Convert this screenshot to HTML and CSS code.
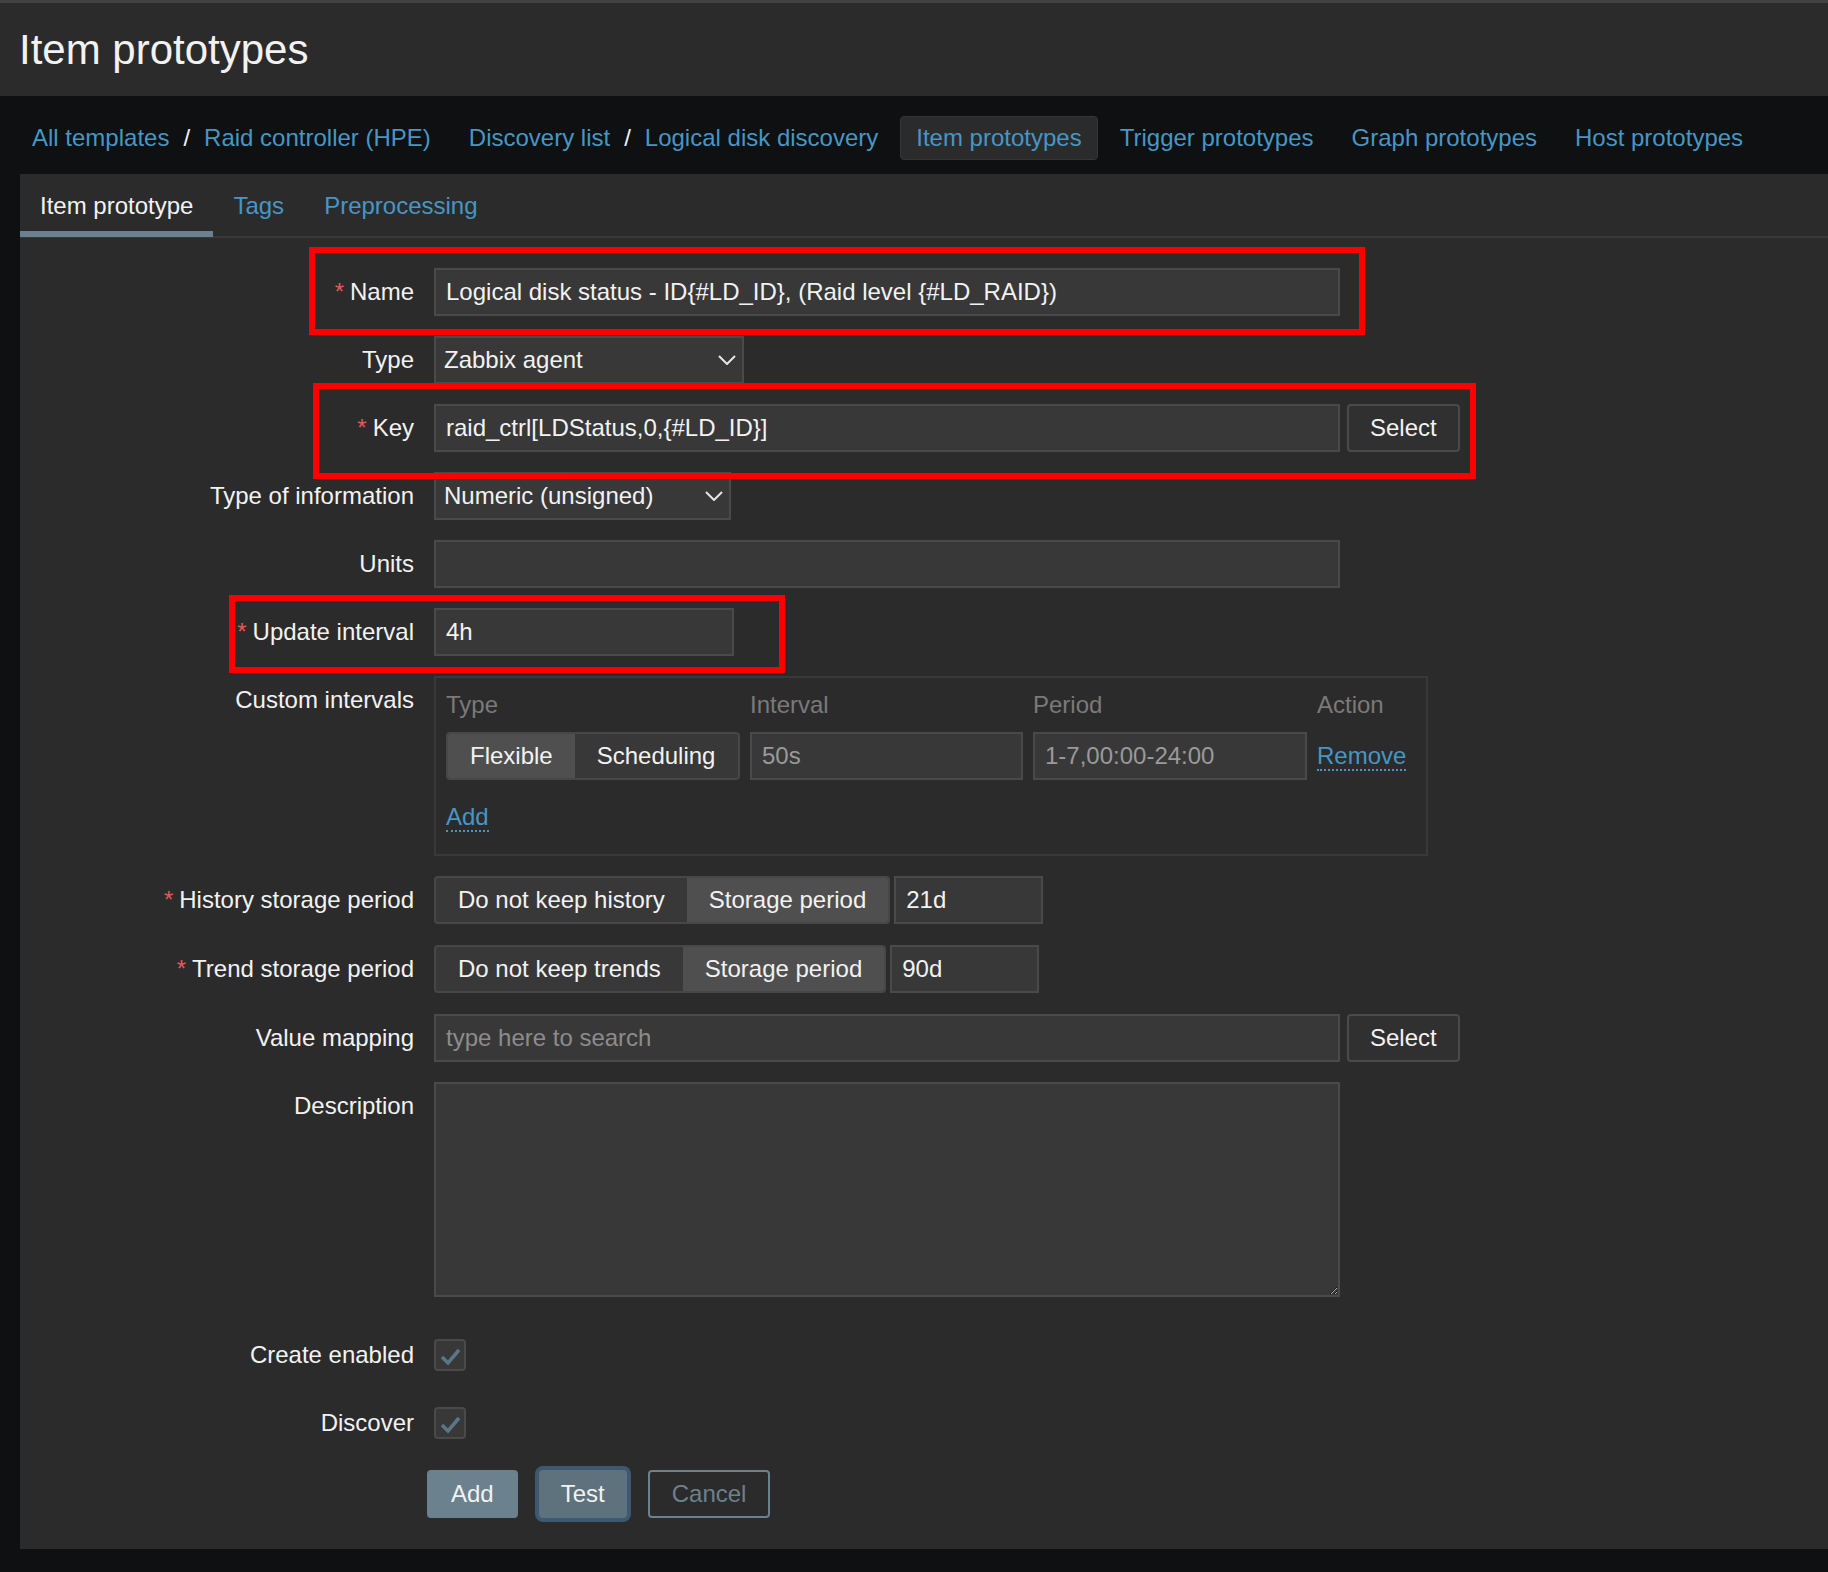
FILE: index.html
```html
<!DOCTYPE html>
<html lang="en">
<head>
<meta charset="utf-8">
<title>Item prototypes</title>
<link rel="stylesheet" href="styles.css">
</head>
<body>
<header class="page-header">
  <h1 class="page-title">Item prototypes</h1>
</header>
<nav class="nav-bar">
  <ul class="nav-list">
    <li class="nav-item"><a class="link">All templates</a><span class="sep">/</span><a class="link">Raid controller (HPE)</a></li>
    <li class="nav-item"><a class="link">Discovery list</a><span class="sep">/</span><a class="link">Logical disk discovery</a></li>
    <li class="nav-item active"><a class="link">Item prototypes</a></li>
    <li class="nav-item"><a class="link">Trigger prototypes</a></li>
    <li class="nav-item"><a class="link">Graph prototypes</a></li>
    <li class="nav-item"><a class="link">Host prototypes</a></li>
  </ul>
</nav>
<main class="content">
  <ul class="tabs">
    <li class="tab active">Item prototype</li>
    <li class="tab">Tags</li>
    <li class="tab">Preprocessing</li>
  </ul>
  <form class="form">
    <label class="lbl"><span class="req">*</span>Name</label>
    <div class="field"><input class="inp w-wide" type="text" value="Logical disk status - ID{#LD_ID}, (Raid level {#LD_RAID})"></div>

    <label class="lbl">Type</label>
    <div class="field">
      <div class="select w-type"><span>Zabbix agent</span><svg class="chev" width="18" height="10" viewBox="0 0 18 10"><polyline points="1,1 9,9 17,1" fill="none" stroke="#e6e6e6" stroke-width="2"/></svg></div>
    </div>

    <label class="lbl"><span class="req">*</span>Key</label>
    <div class="field"><input class="inp w-wide" type="text" value="raid_ctrl[LDStatus,0,{#LD_ID}]"><button type="button" class="btn-alt">Select</button></div>

    <label class="lbl">Type of information</label>
    <div class="field">
      <div class="select w-info"><span>Numeric (unsigned)</span><svg class="chev" width="18" height="10" viewBox="0 0 18 10"><polyline points="1,1 9,9 17,1" fill="none" stroke="#e6e6e6" stroke-width="2"/></svg></div>
    </div>

    <label class="lbl">Units</label>
    <div class="field"><input class="inp w-wide" type="text" value=""></div>

    <label class="lbl"><span class="req">*</span>Update interval</label>
    <div class="field"><input class="inp w-upd" type="text" value="4h"></div>

    <label class="lbl">Custom intervals</label>
    <div class="field">
      <div class="intervals">
        <div class="iv-grid">
          <div class="iv-head">Type</div>
          <div class="iv-head">Interval</div>
          <div class="iv-head">Period</div>
          <div class="iv-head">Action</div>
          <div class="seg"><span class="seg-btn on">Flexible</span><span class="seg-btn">Scheduling</span></div>
          <input class="inp" type="text" placeholder="50s">
          <input class="inp" type="text" placeholder="1-7,00:00-24:00">
          <div class="iv-action"><a class="dotted">Remove</a></div>
        </div>
        <div class="iv-add"><a class="dotted">Add</a></div>
      </div>
    </div>

    <label class="lbl"><span class="req">*</span>History storage period</label>
    <div class="field field-tight">
      <div class="seg"><span class="seg-btn">Do not keep history</span><span class="seg-btn on">Storage period</span></div>
      <input class="inp w-period" type="text" value="21d">
    </div>

    <label class="lbl"><span class="req">*</span>Trend storage period</label>
    <div class="field field-tight">
      <div class="seg"><span class="seg-btn">Do not keep trends</span><span class="seg-btn on">Storage period</span></div>
      <input class="inp w-period" type="text" value="90d">
    </div>

    <label class="lbl">Value mapping</label>
    <div class="field"><input class="inp w-wide search" type="text" placeholder="type here to search"><button type="button" class="btn-alt">Select</button></div>

    <label class="lbl">Description</label>
    <div class="field"><textarea class="textarea"></textarea></div>

    <label class="lbl gap-above">Create enabled</label>
    <div class="field check-field gap-above">
      <span class="checkbox"><svg width="28" height="28" viewBox="0 0 28 28"><polyline points="6,16 12,22 23,9" fill="none" stroke="#5b7787" stroke-width="3.5"/></svg></span>
    </div>

    <label class="lbl">Discover</label>
    <div class="field check-field">
      <span class="checkbox"><svg width="28" height="28" viewBox="0 0 28 28"><polyline points="6,16 12,22 23,9" fill="none" stroke="#5b7787" stroke-width="3.5"/></svg></span>
    </div>

    <div class="buttons">
      <button type="button" class="btn btn-add">Add</button>
      <button type="button" class="btn btn-test">Test</button>
      <button type="button" class="btn btn-cancel">Cancel</button>
    </div>
  </form>

  <div class="mark mark-name"></div>
  <div class="mark mark-key"></div>
  <div class="mark mark-update"></div>
</main>
</body>
</html>
```

FILE: styles.css
```css
* {
  box-sizing: border-box;
}

html,
body {
  margin: 0;
  padding: 0;
}

body {
  background: #0e1012;
  font-family: "Liberation Sans", Arial, sans-serif;
  font-size: 24px;
  color: #f2f2f2;
  height: 1572px;
  overflow: hidden;
}

/* header */
.page-header {
  background: #2b2b2b;
  border-top: 3px solid #424242;
  height: 96px;
  display: flex;
  align-items: center;
  padding-left: 19px;
}

.page-title {
  margin: 0;
  font-size: 42px;
  font-weight: normal;
  line-height: 48px;
  color: #f2f2f2;
}

/* navigation */
.nav-bar {
  height: 78px;
  padding: 20px 0 14px 16px;
}

.nav-list {
  list-style: none;
  margin: 0;
  padding: 0;
  display: flex;
  gap: 6px;
}

.nav-item {
  height: 44px;
  line-height: 42px;
  padding: 0 15px;
  border: 1px solid transparent;
  border-radius: 4px;
  white-space: nowrap;
}

.nav-item.active {
  background: #2b2b2b;
  border-color: #363636;
}

.link {
  color: #4796c4;
  text-decoration: none;
}

.sep {
  color: #f2f2f2;
  margin: 0 14px;
}

/* content */
.content {
  position: relative;
  margin-left: 20px;
  background: #2b2b2b;
  padding-bottom: 31px;
}

.tabs {
  list-style: none;
  margin: 0;
  padding: 0;
  display: flex;
  height: 64px;
  border-bottom: 2px solid #383838;
}

.tab {
  height: 63px;
  line-height: 63px;
  padding: 0 20px;
  color: #4796c4;
}

.tab.active {
  color: #f2f2f2;
  box-shadow: inset 0 -6px 0 #6a8290;
}

/* form */
.form {
  display: grid;
  grid-template-columns: 394px 1fr;
  column-gap: 20px;
  row-gap: 20px;
  padding-top: 30px;
}

.lbl {
  text-align: right;
  line-height: 48px;
  white-space: nowrap;
  color: #f2f2f2;
}

.req {
  color: #e45959;
  margin-right: 6px;
}

.field {
  display: flex;
  align-items: flex-start;
  gap: 7px;
}

.field-tight {
  gap: 4px;
  min-height: 49px;
}

.inp {
  height: 48px;
  background: #383838;
  border: 2px solid #4a4a4a;
  color: #f2f2f2;
  font: inherit;
  font-size: 24px;
  padding: 0 10px;
  outline: none;
  margin: 0;
}

.inp::placeholder {
  color: #9a9a9a;
}

.inp.search::placeholder {
  color: #8c8c8c;
}

.w-wide {
  width: 906px;
}

.w-upd {
  width: 300px;
}

.w-period {
  width: 149px;
}

.select {
  height: 48px;
  background: #383838;
  border: 2px solid #4a4a4a;
  display: flex;
  align-items: center;
  justify-content: space-between;
  padding: 0 6px 0 8px;
  color: #f2f2f2;
}

.w-type {
  width: 310px;
}

.w-info {
  width: 297px;
}

.chev {
  display: block;
}

.btn-alt {
  height: 48px;
  padding: 0 21px;
  background: #303030;
  border: 2px solid #4a4a4a;
  border-radius: 4px;
  color: #f2f2f2;
  font: inherit;
  font-size: 24px;
}

/* custom intervals */
.intervals {
  width: 994px;
  border: 2px solid #393939;
  padding: 6px 10px 13px 10px;
}

.iv-grid {
  display: grid;
  grid-template-columns: 294px 273px 274px auto;
  column-gap: 10px;
  row-gap: 6px;
}

.iv-head {
  line-height: 42px;
  color: #7a7a7a;
}

.iv-grid .inp {
  width: 100%;
}

.iv-action {
  line-height: 48px;
}

.iv-add {
  margin-top: 13px;
  line-height: 48px;
}

.dotted {
  color: #4796c4;
  border-bottom: 2px dotted #4796c4;
}

/* segmented radio */
.seg {
  display: flex;
  height: 48px;
  border: 2px solid #474747;
  border-radius: 4px;
  overflow: hidden;
  background: #383838;
}

.seg-btn {
  padding: 0 22px;
  line-height: 44px;
  color: #f2f2f2;
  white-space: nowrap;
}

.seg-btn.on {
  background: #4f4f4f;
}

/* textarea */
.textarea {
  display: block;
  width: 906px;
  height: 215px;
  background: #383838;
  border: 2px solid #4a4a4a;
  color: #f2f2f2;
  font: inherit;
  resize: both;
  color-scheme: dark;
  margin: 0;
  outline: none;
}

/* checkboxes */
.check-field {
  height: 48px;
  align-items: center;
}

.checkbox {
  width: 32px;
  height: 32px;
  background: #383838;
  border: 2px solid #4a4a4a;
  border-radius: 4px;
  display: flex;
  align-items: center;
  justify-content: center;
}

.checkbox svg {
  display: block;
}

.gap-above {
  margin-top: 14px;
}

/* buttons */
.buttons {
  grid-column: 2;
  display: flex;
  gap: 21px;
  margin-left: -7px;
  margin-top: 3px;
}

.btn {
  height: 48px;
  padding: 0 22px;
  border: 2px solid #6b818e;
  border-radius: 4px;
  font: inherit;
  font-size: 24px;
  color: #f2f2f2;
}

.btn-add {
  background: #6b818e;
}

.btn-test {
  padding: 0 20px;
  background: #5e727d;
  border-color: #5e727d;
  box-shadow: 0 0 0 4px #3d5870;
}

.btn-cancel {
  background: transparent;
  color: #6b818e;
}

/* annotation boxes */
.mark {
  position: absolute;
  border: 6px solid #ff0000;
  pointer-events: none;
}

.mark-name {
  left: 289px;
  top: 73px;
  width: 1056px;
  height: 88px;
}

.mark-key {
  left: 293px;
  top: 209px;
  width: 1163px;
  height: 96px;
}

.mark-update {
  left: 209px;
  top: 421px;
  width: 556px;
  height: 78px;
}
```
